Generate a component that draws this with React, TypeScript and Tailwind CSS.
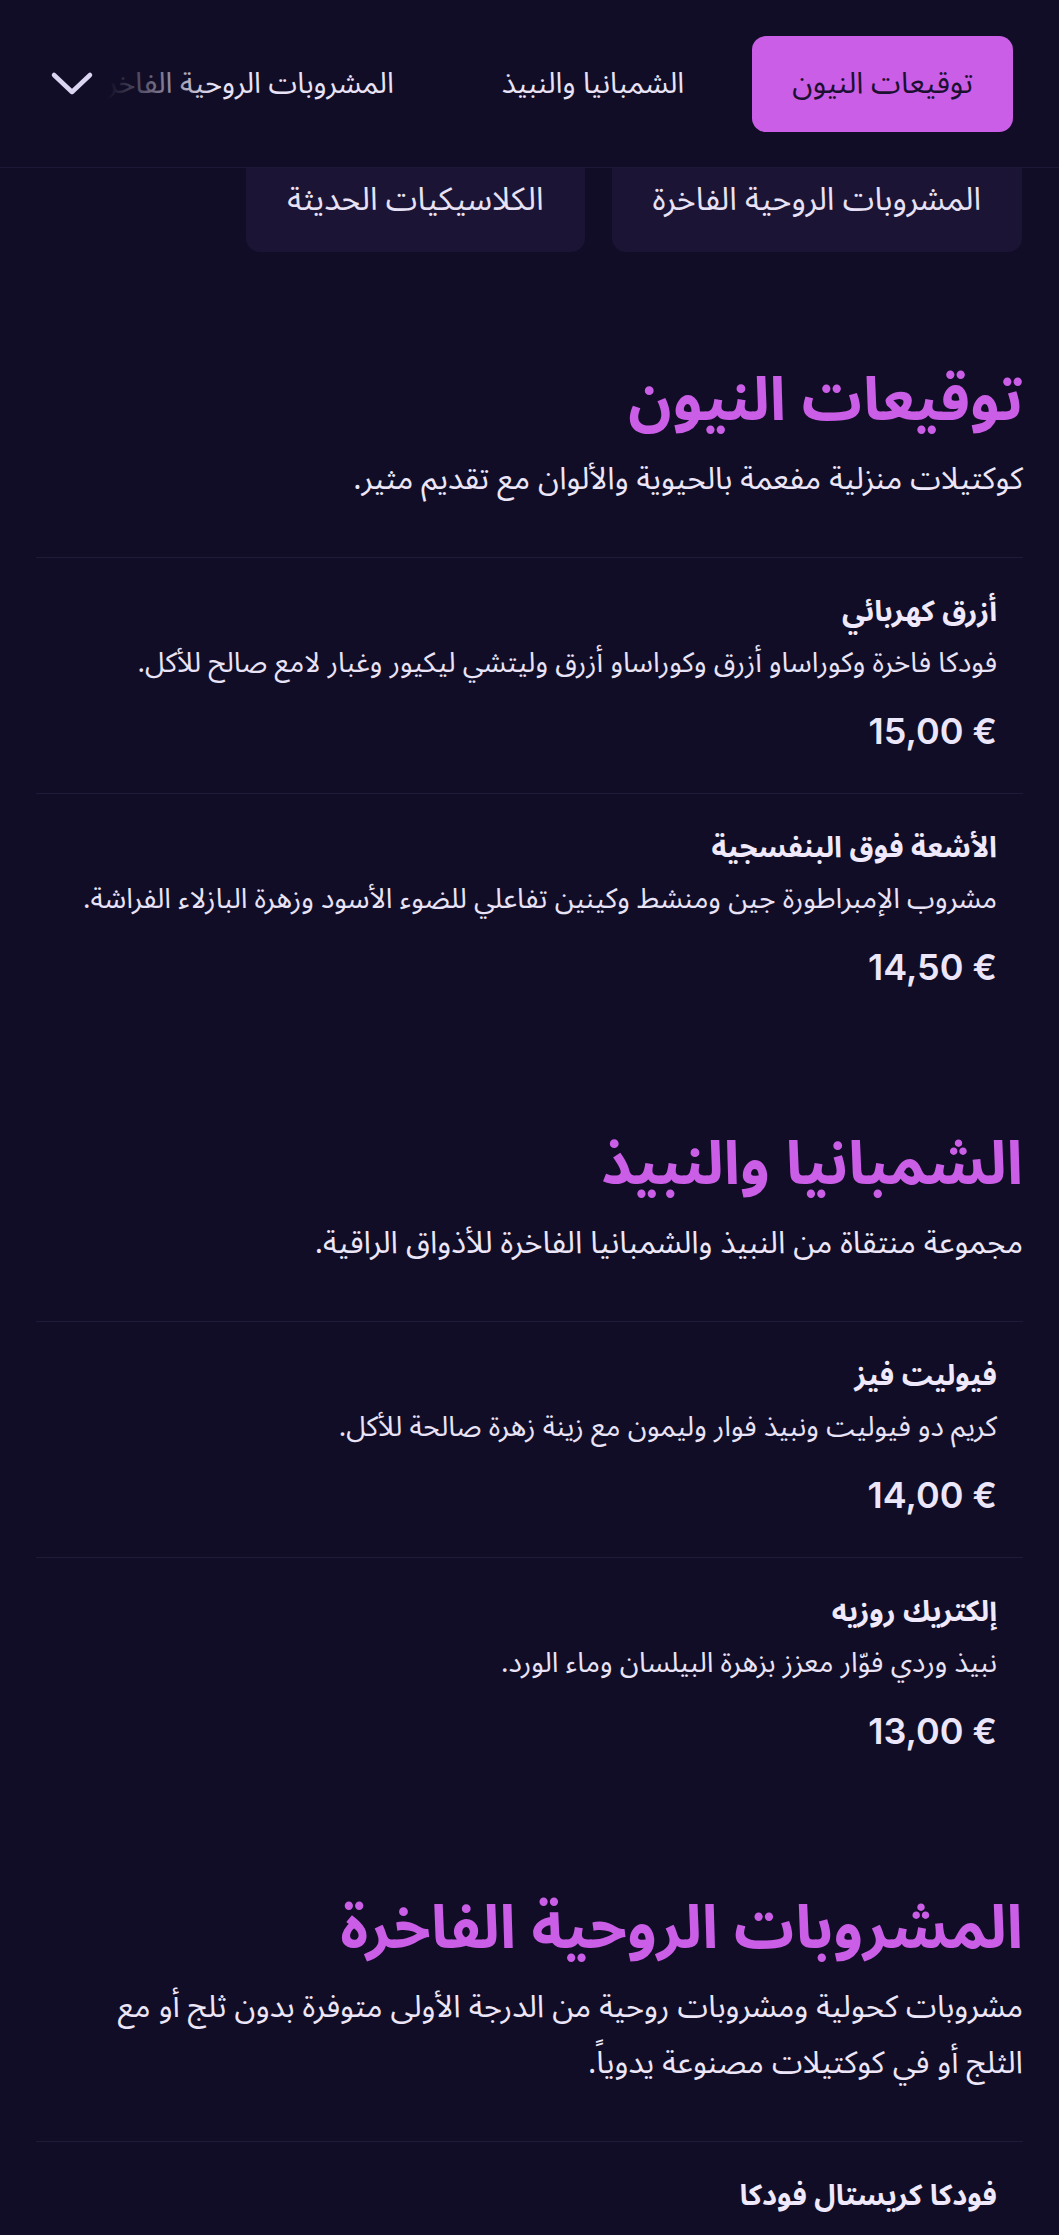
import React from "react";

type Item = { name: string; description: string; price: string };
type Section = { title: string; description: string; items: Item[] };

const tabs = [
  "توقيعات النيون",
  "الشمبانيا والنبيذ",
  "المشروبات الروحية الفاخرة",
  "الكلاسيكيات الحديثة",
];

const sections: Section[] = [
  {
    title: "توقيعات النيون",
    description: "كوكتيلات منزلية مفعمة بالحيوية والألوان مع تقديم مثير.",
    items: [
      {
        name: "أزرق كهربائي",
        description: "فودكا فاخرة وكوراساو أزرق وكوراساو أزرق وليتشي ليكيور وغبار لامع صالح للأكل.",
        price: "15,00 €",
      },
      {
        name: "الأشعة فوق البنفسجية",
        description: "مشروب الإمبراطورة جين ومنشط وكينين تفاعلي للضوء الأسود وزهرة البازلاء الفراشة.",
        price: "14,50 €",
      },
    ],
  },
  {
    title: "الشمبانيا والنبيذ",
    description: "مجموعة منتقاة من النبيذ والشمبانيا الفاخرة للأذواق الراقية.",
    items: [
      {
        name: "فيوليت فيز",
        description: "كريم دو فيوليت ونبيذ فوار وليمون مع زينة زهرة صالحة للأكل.",
        price: "14,00 €",
      },
      {
        name: "إلكتريك روزيه",
        description: "نبيذ وردي فوّار معزز بزهرة البيلسان وماء الورد.",
        price: "13,00 €",
      },
    ],
  },
  {
    title: "المشروبات الروحية الفاخرة",
    description:
      "مشروبات كحولية ومشروبات روحية من الدرجة الأولى متوفرة بدون ثلج أو مع الثلج أو في كوكتيلات مصنوعة يدوياً.",
    items: [
      {
        name: "فودكا كريستال فودكا",
        description: "فودكا فاخرة مقطرة عدة مرات وتقدم باردة.",
        price: "16,00 €",
      },
    ],
  },
];

const arabic = "font-['Noto_Sans_Arabic','DejaVu_Sans',sans-serif]";

function MenuItem({ item }: { item: Item }) {
  return (
    <div className="border-t border-[#1f1a38] px-[26px] pt-[34px] pb-[40px]">
      <h3 className="text-[29px] leading-[40px] font-bold text-[#efe9fb]">{item.name}</h3>
      <p className="mt-[12px] text-[28px] leading-[40px] text-[#e9e3f7]">{item.description}</p>
      <p
        dir="ltr"
        className="mt-[25px] text-right text-[36px] leading-[44px] font-semibold text-[#ece6fa] font-['Inter',sans-serif]"
      >
        {item.price}
      </p>
    </div>
  );
}

export default function App() {
  return (
    <div dir="rtl" className={`min-h-screen bg-[#110d27] ${arabic}`}>
      <header className="relative h-[168px] border-b border-[#1d1835] bg-[#110d26] overflow-hidden">
        <nav className="flex h-full items-center gap-[28px] pr-[46px] whitespace-nowrap">
          {tabs.map((t, i) =>
            i === 0 ? (
              <button
                key={t}
                className="shrink-0 h-[96px] px-[40px] rounded-[14px] bg-[#cb5ee6] text-[30px] text-[#1b1030]"
              >
                {t}
              </button>
            ) : (
              <button key={t} className="shrink-0 h-[96px] px-[40px] text-[29px] text-[#e8e2f6]">
                {t}
              </button>
            )
          )}
        </nav>
        <div
          dir="ltr"
          className="absolute inset-y-0 left-0 w-[215px] flex items-center bg-gradient-to-r from-[#110d26] from-50% to-transparent"
        >
          <button className="ml-[48px] p-0 text-[#dcd5f2]">
            <svg width="48" height="30" viewBox="0 0 48 30" fill="none" stroke="currentColor" strokeWidth="4.5" strokeLinecap="round" strokeLinejoin="round">
              <polyline points="6,6 24,23 42,6" />
            </svg>
          </button>
        </div>
      </header>

      <div className="flex gap-[27px] pr-[37px]">
        <div className="h-[84px] pb-[20px] px-[41px] flex items-center rounded-b-[14px] bg-[#1b1434] text-[32px] text-[#e8e2f6]">
          المشروبات الروحية الفاخرة
        </div>
        <div className="h-[84px] pb-[20px] px-[41px] flex items-center rounded-b-[14px] bg-[#1b1434] text-[32px] text-[#e8e2f6]">
          الكلاسيكيات الحديثة
        </div>
      </div>

      <main className="px-[36px] pt-[113px] flex flex-col gap-[100px]">
        {sections.map((s) => (
          <section key={s.title}>
            <h2 className="text-[60px] leading-[72px] font-bold text-[#cb5ee6]">{s.title}</h2>
            <p className="mt-[14px] mb-[50px] pl-[24px] text-[31px] leading-[56px] text-[#ece6f8]">{s.description}</p>
            {s.items.map((it) => (
              <MenuItem key={it.name} item={it} />
            ))}
          </section>
        ))}
      </main>
    </div>
  );
}
